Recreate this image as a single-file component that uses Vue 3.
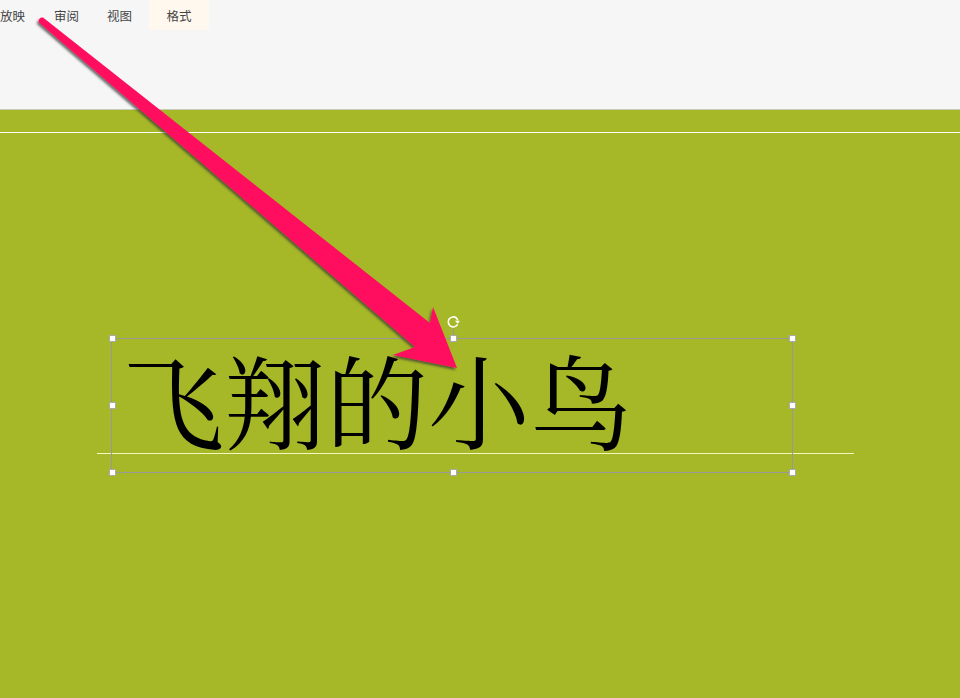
<script setup>
const tabs = [
  { name: '放映', active: false },
  { name: '审阅', active: false },
  { name: '视图', active: false },
  { name: '格式', active: true },
];
const handles = ['tl', 'tc', 'tr', 'ml', 'mr', 'bl', 'bc', 'br'];
</script>

<template>
  <div class="page">
    <header class="ribbon">
      <div class="tabs">
        <div v-for="tab in tabs" :key="tab.name" class="tab" :class="{ active: tab.active }">{{ tab.name }}</div>
      </div>
    </header>

    <main class="slide">
      <div class="guide-top"></div>
      <div class="guide-base"></div>

      <div class="textbox">
        <div class="title">飞翔的小鸟</div>
        <span v-for="h in handles" :key="h" class="handle" :class="h"></span>
        <span class="stem"></span>
        <svg class="rotate" width="14" height="14" viewBox="0 0 14 14">
          <path d="M11.6 9.4A5 5 0 1 1 10.6 3.2L11.8 5.4" fill="none" stroke="#fff" stroke-width="1.6" />
          <path d="M8.8 5.8H14L11.8 8.8Z" fill="#fff" />
        </svg>
      </div>
    </main>

    <svg class="arrow" width="960" height="698" viewBox="0 0 960 698">
      <defs>
        <filter id="arrow-shadow" x="-10%" y="-10%" width="120%" height="120%">
          <feDropShadow dx="-1.5" dy="2" stdDeviation="1.2" flood-color="#333" flood-opacity="0.7" />
        </filter>
      </defs>
      <path
        d="M38.6 22.2Q38.6 17.2 43 17.6L430 323L433 307L457 368L393 355L415 347Z"
        fill="#ff0f5f"
        filter="url(#arrow-shadow)"
      />
    </svg>
  </div>
</template>

<style scoped>
.page {
  position: relative;
  width: 960px;
  height: 698px;
  overflow: hidden;
  font-family: "Liberation Sans", "Noto Sans CJK SC", sans-serif;
}

.ribbon {
  height: 109px;
  background: #f6f6f6;
  border-bottom: 1px solid #c8cbb8;
}

.tabs {
  display: flex;
}

.tab {
  height: 30px;
  width: 53px;
  line-height: 35px;
  font-size: 12.5px;
  color: #444;
  text-align: center;
  box-sizing: border-box;
}

.tab:first-child {
  width: 40px;
  text-align: left;
}

.tab.active {
  width: 60px;
  margin-left: 3px;
  background: #fff8ef;
}

.slide {
  position: relative;
  height: 588px;
  background: #a6b727;
}

.guide-top {
  position: absolute;
  left: 0;
  right: 0;
  top: 22px;
  height: 1px;
  background: #fff;
}

.guide-base {
  position: absolute;
  left: 97px;
  top: 343px;
  width: 757px;
  height: 1px;
  background: #f4f7c0;
}

.textbox {
  position: absolute;
  left: 111px;
  top: 228px;
  width: 682px;
  height: 135px;
  box-sizing: border-box;
  border: 1px solid #999;
  padding: 0 10px;
}

.title {
  font-family: "Noto Serif CJK SC", "Noto Sans CJK SC", serif;
  font-size: 102px;
  line-height: 118px;
  color: #000;
  white-space: nowrap;
}

.handle {
  position: absolute;
  width: 5px;
  height: 5px;
  background: #fff;
  border: 1px solid #aaa;
}

.tl, .tc, .tr { top: -4px; }
.ml, .mr { top: 63px; }
.bl, .bc, .br { bottom: -4px; }
.tl, .ml, .bl { left: -3px; }
.tc, .bc { left: 338px; }
.tr, .mr, .br { right: -4px; }

.stem {
  position: absolute;
  left: 341px;
  top: -12px;
  width: 1px;
  height: 8px;
  background: #999;
}

.rotate {
  position: absolute;
  left: 334px;
  top: -24px;
}

.arrow {
  position: absolute;
  left: 0;
  top: 0;
  pointer-events: none;
}
</style>
